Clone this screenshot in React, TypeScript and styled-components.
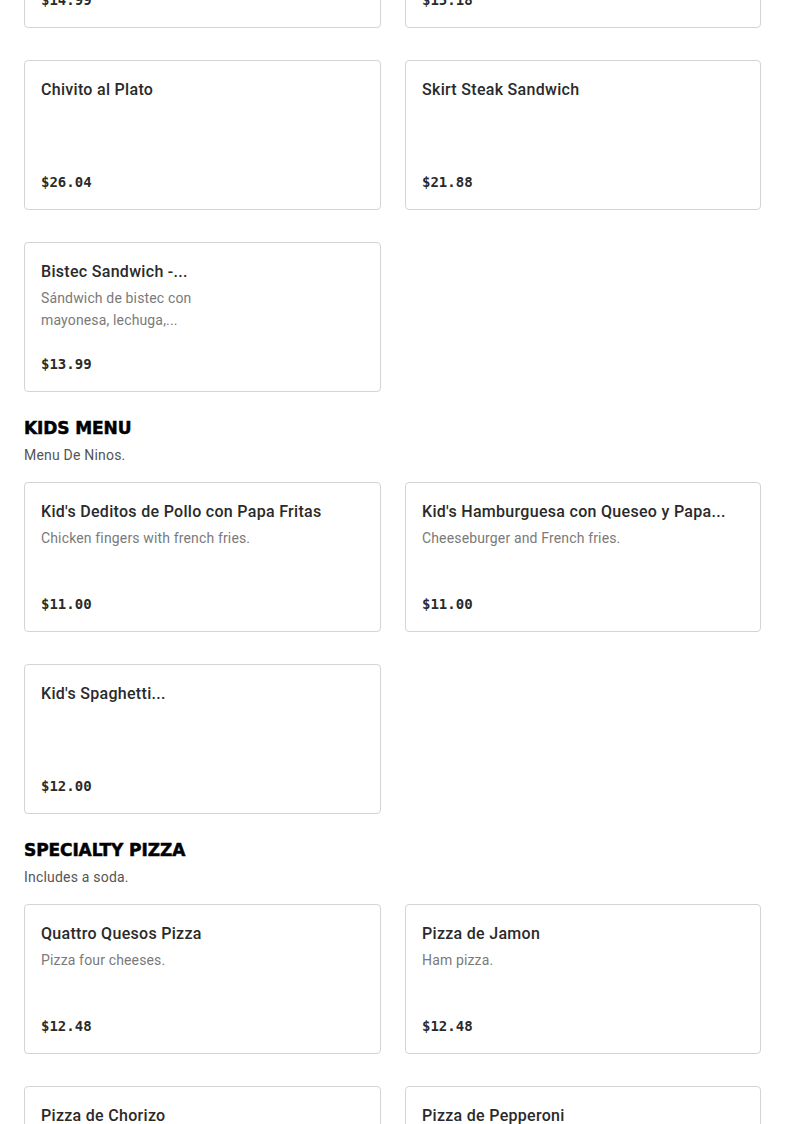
import React from 'react';
import styled, {createGlobalStyle} from 'styled-components';

type Item = {
    name: string;
    description?: string;
    price: string;
    narrow?: boolean;
};

type Section = {
    title?: string;
    subtitle?: string;
    items: Item[];
};

const sections: Section[] = [
    {
        items: [
            {name: 'Milanesa al Pan', price: '$14.99'},
            {name: 'Chivito al Pan', price: '$15.18'},
            {name: 'Chivito al Plato', price: '$26.04'},
            {name: 'Skirt Steak Sandwich', price: '$21.88'},
            {
                name: 'Bistec Sandwich -...',
                description: 'Sándwich de bistec con mayonesa, lechuga,...',
                price: '$13.99',
                narrow: true,
            },
        ],
    },
    {
        title: 'KIDS MENU',
        subtitle: 'Menu De Ninos.',
        items: [
            {name: "Kid's Deditos de Pollo con Papa Fritas", description: 'Chicken fingers with french fries.', price: '$11.00'},
            {name: "Kid's Hamburguesa con Queseo y Papa...", description: 'Cheeseburger and French fries.', price: '$11.00'},
            {name: "Kid's Spaghetti...", price: '$12.00'},
        ],
    },
    {
        title: 'SPECIALTY PIZZA',
        subtitle: 'Includes a soda.',
        items: [
            {name: 'Quattro Quesos Pizza', description: 'Pizza four cheeses.', price: '$12.48'},
            {name: 'Pizza de Jamon', description: 'Ham pizza.', price: '$12.48'},
            {name: 'Pizza de Chorizo', description: 'Chorizo pizza.', price: '$12.48'},
            {name: 'Pizza de Pepperoni', description: 'Pepperoni pizza.', price: '$12.48'},
        ],
    },
];

const MenuCard = ({item}: {item: Item}) => (
    <StyledCard>
        <StyledText $narrow={item.narrow}>
            <StyledName>{item.name}</StyledName>
            {item.description && <StyledDescription>{item.description}</StyledDescription>}
        </StyledText>
        <StyledPrice>{item.price}</StyledPrice>
    </StyledCard>
);

export default function App() {
    return (
        <>
            <GlobalStyle/>
            <StyledMenu>
                {sections.map((section, index) => (
                    <StyledSection key={index}>
                        {section.title && <StyledHeading>{section.title}</StyledHeading>}
                        {section.subtitle && <StyledSubtitle>{section.subtitle}</StyledSubtitle>}
                        <StyledGrid $spaced={!!section.title}>
                            {section.items.map((item) => <MenuCard key={item.name} item={item}/>)}
                        </StyledGrid>
                    </StyledSection>
                ))}
            </StyledMenu>
        </>
    );
}

const GlobalStyle = createGlobalStyle`
  body {
    margin: 0;
    background: #fff;
    font-family: Roboto, "Liberation Sans", Arial, sans-serif;
    -webkit-font-smoothing: antialiased;
  }
`;

const StyledMenu = styled.main`
  display: flex;
  flex-direction: column;
  gap: 24px;
  padding: 0 24px;
  margin-top: -122px;
`;

const StyledSection = styled.section`
  display: flex;
  flex-direction: column;
`;

const StyledHeading = styled.h2`
  margin: 0;
  padding-top: 2px;
  font-family: "DejaVu Sans", sans-serif;
  font-size: 17px;
  line-height: 20px;
  font-weight: 700;
  color: #000;
  letter-spacing: -0.1px;
  -webkit-text-stroke: 0.5px #000;
`;

const StyledSubtitle = styled.p`
  margin: 6px 0 0;
  font-size: 14px;
  line-height: 22px;
  color: #555;
  letter-spacing: 0.2px;
`;

const StyledGrid = styled.div<{ $spaced?: boolean }>`
  display: grid;
  grid-template-columns: 357px 356px;
  column-gap: 24px;
  row-gap: 32px;
  margin-top: ${({$spaced}) => ($spaced ? '16px' : '0')};
`;

const StyledCard = styled.article`
  display: flex;
  flex-direction: column;
  height: 150px;
  box-sizing: border-box;
  padding: 17px 16px 15px;
  border: 1px solid #d4d4d4;
  border-radius: 4px;
  background: #fff;
`;

const StyledText = styled.div<{ $narrow?: boolean }>`
  display: flex;
  flex-direction: column;
  gap: 3px;
  max-width: ${({$narrow}) => ($narrow ? '190px' : 'none')};
`;

const StyledName = styled.h3`
  margin: 0;
  font-size: 16px;
  line-height: 24px;
  font-weight: 500;
  color: #2a2a2a;
  letter-spacing: 0.3px;
  white-space: nowrap;
  overflow: hidden;
`;

const StyledDescription = styled.p`
  margin: 0;
  font-size: 14px;
  line-height: 22px;
  color: #7a7a7a;
  letter-spacing: 0.15px;
`;

const StyledPrice = styled.span`
  margin-top: auto;
  font-family: "DejaVu Sans Mono", monospace;
  font-size: 14px;
  line-height: 24px;
  font-weight: 700;
  color: #2a2a2a;
`;
